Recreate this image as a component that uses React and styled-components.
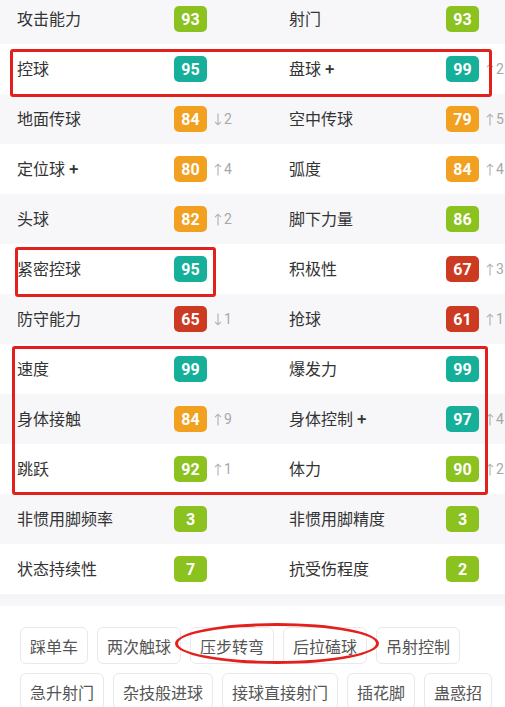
import React from "react";
import styled, { createGlobalStyle } from "styled-components";

const GlobalStyle = createGlobalStyle`
  html, body {
    margin: 0;
    padding: 0;
    background: #ffffff;
    overflow: hidden;
  }
  body {
    font-family: "Noto Sans CJK SC", "Noto Sans", sans-serif;
  }
`;

const colors = {
  lime: "#8cc21f",
  teal: "#16b09a",
  orange: "#f1a020",
  red: "#cc3a22",
};

const Page = styled.div`
  position: relative;
  width: 505px;
  height: 707px;
  overflow: hidden;
`;

const Stats = styled.div`
  margin-top: -6px;
`;

const Row = styled.div`
  display: flex;
  height: 50px;
  background: ${(p) => (p.$alt ? "#f7f7f9" : "#ffffff")};
`;

const Cell = styled.div`
  flex: 0 0 ${(p) => (p.$right ? "233px" : "272px")};
  display: flex;
  align-items: center;
  padding-left: 17px;
  box-sizing: border-box;
  overflow: hidden;
`;

const Label = styled.div`
  width: 157px;
  font-size: 16px;
  line-height: 20px;
  margin-top: -2px;
  color: #333;
  white-space: nowrap;
`;

const Plus = styled.b`
  font-weight: 700;
  margin-left: 4px;
`;

const Badge = styled.div`
  width: 33px;
  height: 26px;
  border-radius: 5px;
  background: ${(p) => colors[p.$c]};
  color: #fff;
  font-family: Roboto, "Liberation Sans", sans-serif;
  font-weight: 700;
  font-size: 16px;
  display: flex;
  align-items: center;
  justify-content: center;
  flex: none;
`;

const Delta = styled.div`
  margin-left: 7px;
  display: flex;
  align-items: center;
  gap: 2px;
  font-family: Roboto, "Liberation Sans", sans-serif;
  font-size: 14px;
  color: #a8a8a8;
  white-space: nowrap;
`;

const Divider = styled.div`
  height: 12px;
  background: linear-gradient(#f4f4f6, #f8f8fa);
`;

const Tags = styled.div`
  display: flex;
  flex-wrap: wrap;
  gap: 9px 9px;
  padding: 21px 0 0 20px;
`;

const Tag = styled.div`
  height: 37px;
  padding: 0 9px;
  border: 1px solid #e9e9ec;
  border-radius: 6px;
  box-sizing: border-box;
  display: flex;
  align-items: center;
  font-size: 16px;
  color: #555;
  white-space: nowrap;
`;

const Mark = styled.div`
  position: absolute;
  border: 3px solid #e3201c;
  border-radius: ${(p) => (p.$oval ? "50%" : "3px")};
  box-sizing: border-box;
  pointer-events: none;
`;

function Arrow({ down }) {
  return (
    <svg width="8" height="13" viewBox="0 0 8 13" style={{ transform: down ? "rotate(180deg)" : "none" }}>
      <path d="M4 12.5V1.2M1 4.2L4 1.2L7 4.2" fill="none" stroke="#b0b0b0" strokeWidth="1.1" />
    </svg>
  );
}

const rows = [
  [["攻击能力", 93, "lime"], ["射门", 93, "lime"]],
  [["控球", 95, "teal"], ["盘球", 99, "teal", "u2", true]],
  [["地面传球", 84, "orange", "d2"], ["空中传球", 79, "orange", "u5"]],
  [["定位球", 80, "orange", "u4", true], ["弧度", 84, "orange", "u4"]],
  [["头球", 82, "orange", "u2"], ["脚下力量", 86, "lime"]],
  [["紧密控球", 95, "teal"], ["积极性", 67, "red", "u3"]],
  [["防守能力", 65, "red", "d1"], ["抢球", 61, "red", "u1"]],
  [["速度", 99, "teal"], ["爆发力", 99, "teal"]],
  [["身体接触", 84, "orange", "u9"], ["身体控制", 97, "teal", "u4", true]],
  [["跳跃", 92, "lime", "u1"], ["体力", 90, "lime", "u2"]],
  [["非惯用脚频率", 3, "lime"], ["非惯用脚精度", 3, "lime"]],
  [["状态持续性", 7, "lime"], ["抗受伤程度", 2, "lime"]],
];

const tags = [
  "踩单车", "两次触球", "压步转弯", "后拉磕球", "吊射控制",
  "急升射门", "杂技般进球", "接球直接射门", "插花脚", "蛊惑招",
];

function StatCell({ data, right }) {
  const [label, value, color, delta, plus] = data;
  return (
    <Cell $right={right}>
      <Label>
        {label}
        {plus && <Plus>+</Plus>}
      </Label>
      <Badge $c={color}>{value}</Badge>
      {delta && (
        <Delta>
          <Arrow down={delta[0] === "d"} />
          {delta.slice(1)}
        </Delta>
      )}
    </Cell>
  );
}

export default function App() {
  return (
    <>
      <GlobalStyle />
      <Page>
        <Stats>
          {rows.map((r, i) => (
            <Row key={i} $alt={i % 2 === 0}>
              <StatCell data={r[0]} />
              <StatCell data={r[1]} right />
            </Row>
          ))}
        </Stats>
        <Divider />
        <Tags>
          {tags.map((t) => (
            <Tag key={t}>{t}</Tag>
          ))}
        </Tags>
        <Mark style={{ left: 10, top: 49, width: 482, height: 48 }} />
        <Mark style={{ left: 15, top: 247, width: 201, height: 50 }} />
        <Mark style={{ left: 12, top: 346, width: 476, height: 149 }} />
        <Mark $oval style={{ left: 175, top: 623, width: 204, height: 41 }} />
      </Page>
    </>
  );
}
